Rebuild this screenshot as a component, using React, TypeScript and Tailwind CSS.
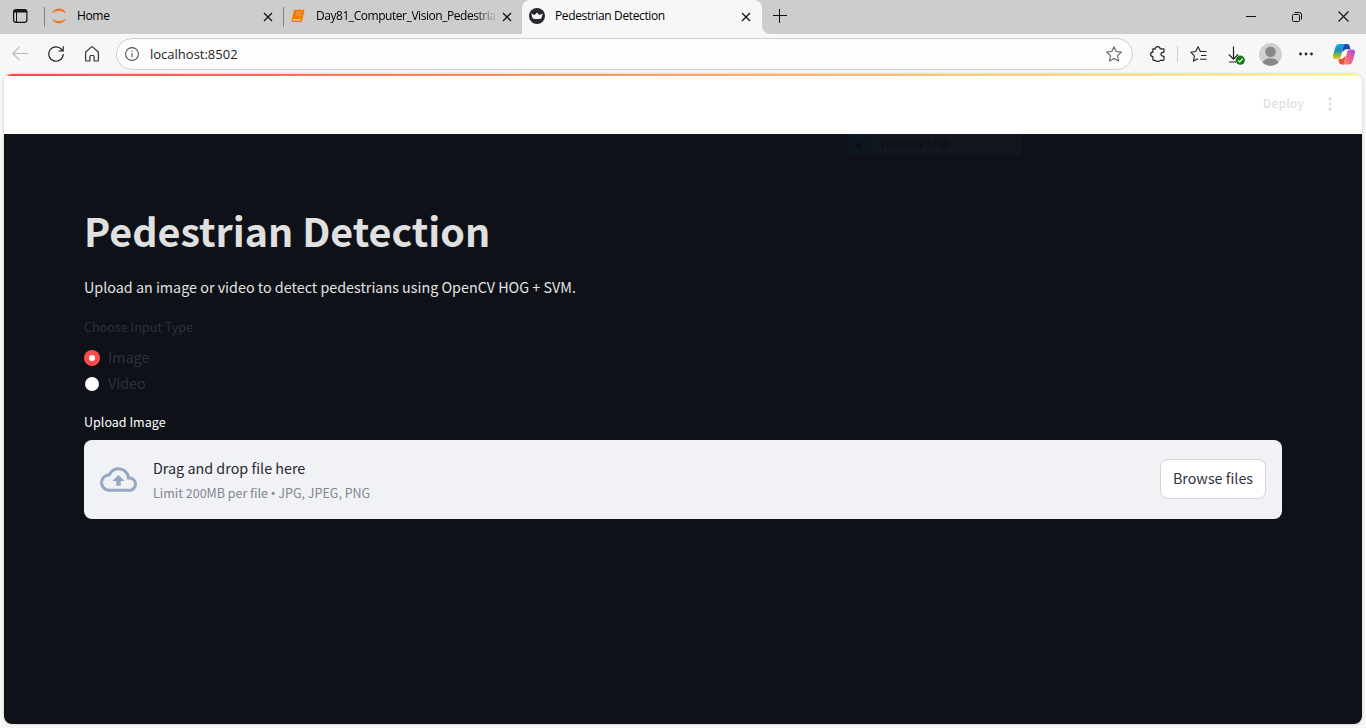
import React from 'react';

const UI = "font-['Open_Sans','Noto_Sans',sans-serif]";

function Close({ className = '' }: { className?: string }) {
  return (
    <svg className={`mt-px h-[10px] w-[10px] shrink-0 ${className}`} viewBox="0 0 10 10" fill="none" stroke="#111" strokeWidth="1.3">
      <path d="M1 1l8 8M9 1L1 9" />
    </svg>
  );
}

function TabStrip() {
  return (
    <div className="flex h-[34px] bg-[#cdcdcd] text-black">
      <div className="flex w-[44px] items-center pl-[13px]">
        <svg className="mb-[2px] h-[14px] w-[15px]" viewBox="0 0 15 14" fill="none" stroke="#111">
          <rect x=".6" y=".6" width="13.3" height="12.8" rx="2.4" strokeWidth="1.2" />
          <path d="M1 2.3h13" strokeWidth="2.4" />
          <path d="M3.5 3v10" strokeWidth="1" />
        </svg>
      </div>
      <div className="flex h-[32px] w-[239px] items-center">
        <div className="mt-[2px] h-5 w-px bg-[#858585]" />
        <svg className="ml-[6px] h-4 w-4" viewBox="0 0 16 16" fill="#f37726">
          <path d="M.8 5.4C2 2.300 4.700.6 8 .6s6 1.700 7.200 4.800C13.500 3.900 11 3 8 3S2.500 3.900.8 5.400z" />
          <path d="M.8 10.600C2 13.700 4.700 15.400 8 15.400s6-1.700 7.200-4.800C13.500 12.100 11 13 8 13S2.500 12.100.8 10.600z" />
        </svg>
        <span className={`ml-[10px] flex-1 text-[12px] leading-4 tracking-[-0.35px] ${UI}`}>Home</span>
        <Close className="mr-[10px]" />
      </div>
      <div className="flex h-[34px] w-[239px] items-center rounded-br-lg pb-[2px]">
        <div className="mt-[2px] h-5 w-px bg-[#858585]" />
        <svg className="ml-[7px] h-[14px] w-[14px]" viewBox="0 0 14 14">
          <path d="M4 .8h8.400c.8 0 1.200.6 1 1.300l-2.200 9.700c-.2.800-.8 1.300-1.600 1.300H2C.8 13.100.3 12 .6 11L2.700 2C2.900 1.200 3.300.8 4 .8z" fill="#f57c00" />
          <path d="M5 3.500h5.800M4.500 5.800h5.700" stroke="#d4b08d" strokeWidth=".9" />
          <path d="M1.700 10.900h8.200" stroke="#eee" strokeWidth="1" />
        </svg>
        <span className={`ml-[11px] w-[179px] whitespace-nowrap text-[12px] leading-4 tracking-[-0.45px] [mask-image:linear-gradient(to_right,black_158px,transparent_182px)] ${UI}`}>
          Day81_Computer_Vision_Pedestria
        </span>
        <Close className="ml-[7px]" />
      </div>
      <div className="flex h-[34px] w-[240px] items-center rounded-t-lg bg-[#f7f7f7] pb-[2px] pl-[7px]">
        <svg className="h-4 w-4" viewBox="0 0 16 16">
          <circle cx="8" cy="8" r="8" fill="#262730" />
          <path d="M2.200 5.600l3.400 1.500L8 4.600l2.400 2.500 3.400-1.500-1.500 4.800c-2.600.8-6 .8-8.600 0z" fill="#f4f4f4" />
        </svg>
        <span className={`ml-[10px] flex-1 whitespace-nowrap text-[12px] leading-4 tracking-[-0.37px] ${UI}`}>Pedestrian Detection</span>
        <Close className="mr-[11px]" />
      </div>
      <div className="flex-1 bg-[#f7f7f7]">
        <div className="flex h-[34px] items-center rounded-bl-lg bg-[#cdcdcd] pb-[2px] pl-[11px] pr-[17px]">
          <svg className="h-[14px] w-[14px]" viewBox="0 0 14 14" stroke="#111" strokeWidth="1">
            <path d="M0 6.500h14M6.500 0v14" />
          </svg>
          <div className="flex-1" />
          <div className="mr-[36px] h-px w-[10px] bg-[#111]" />
          <svg className="mr-[36px] mt-[2px] h-[10px] w-[10px]" viewBox="0 0 10 10" fill="none" stroke="#111">
            <rect x=".5" y="2.500" width="7" height="7" rx="1" />
            <path d="M2.500.5H7.500a2 2 0 0 1 2 2V7.500" />
          </svg>
          <svg className="mt-px h-[11px] w-[11px]" viewBox="0 0 11 11" stroke="#111" strokeWidth="1.100">
            <path d="M.5.5l10 10M10.500.5l-10 10" />
          </svg>
        </div>
      </div>
    </div>
  );
}

function Toolbar() {
  return (
    <div className="flex h-[40px] items-center bg-[#f7f7f7]">
      <svg className="ml-3 h-4 w-4" viewBox="0 0 16 16" fill="none" stroke="#b8b8b8" strokeWidth="1.100">
        <path d="M16 7.500H.8M7.500.9L.8 7.500l6.700 6.700" />
      </svg>
      <svg className="ml-[20px] h-4 w-4" viewBox="0 0 16 16" fill="none" stroke="#222" strokeWidth="1.200">
        <path d="M15.200 8A7.200 7.200 0 1 1 13.600 3.500L14.700 4.700M15.200.3V5H10.500" />
      </svg>
      <svg className="ml-[21px] h-4 w-[14px]" viewBox="0 0 14 16" fill="none" stroke="#333" strokeWidth="1.200">
        <path d="M.6 6.900Q.6 6.200 1.100 5.700L6.200 1.100Q7 .5 7.800 1.100L12.900 5.700Q13.400 6.200 13.400 6.900V14Q13.400 15 12.500 15H9.700Q9.100 15 9.100 14.400V10.800Q9.100 9.500 8 9.500H6Q4.900 9.500 4.900 10.800V14.400Q4.900 15 4.300 15H1.500Q.6 15 .6 14z" />
      </svg>
      <div className="ml-[17px] flex h-8 w-[1017px] items-center rounded-full border border-[#cfcfcf] bg-[#fdfdfd]">
        <svg className="ml-2 h-[14px] w-[14px]" viewBox="0 0 14 14" fill="none" stroke="#555" strokeWidth="1.100">
          <circle cx="7" cy="7" r="6.400" />
          <path d="M7 6v4.200M7 3.500v1.300" />
        </svg>
        <span className={`ml-[11px] flex-1 text-[13px] leading-5 text-[#222] ${UI}`}>localhost:8502</span>
        <svg className="mr-[10px] h-4 w-4" viewBox="0 0 16 16" fill="none" stroke="#666" strokeWidth="1.100" strokeLinejoin="round">
          <path d="M8 .7l2.200 4.800 5.200.6-3.900 3.600 1.100 5.300L8 12.400 3.400 15l1.100-5.300L.6 6.100l5.200-.6z" />
        </svg>
      </div>
      <svg className="ml-[17px] h-4 w-[15px]" viewBox="0 0 15 16" fill="none" stroke="#222" strokeWidth="1.200" strokeLinejoin="round">
        <path d="M2.900 2.900H5.300C5.200 1.400 6.200.7 7.700.7s2.500.7 2.400 2.200h3.200q.7 0 .7.700V6.200C12.200 6.200 11 6.900 11 8.300s1.200 2.100 3 2V13.600q0 .7-.7.700H10.200C10 15 9 15.400 7.700 15.400S5.500 15 5.300 14.300H3.600q-.7 0-.7-.7V10.600C1.500 10.600.6 9.800.6 8.300S1.500 6.200 2.900 6.200z" />
      </svg>
      <div className="ml-[12px] h-4 w-px bg-[#ccc]" />
      <svg className="ml-[12px] h-4 w-[17px]" viewBox="0 0 17 16" fill="none" stroke="#222" strokeWidth="1.100" strokeLinejoin="round">
        <path d="M16.500 5.500H10.400L8 .8 5.700 5.500.7 6.200l3.700 3.600-.9 5.300L8 12.700M11 9.500h5.500M10 13.200h6.500" />
      </svg>
      <svg className="ml-[21px] mt-[3px] h-[19px] w-[17px]" viewBox="0 0 17 19" fill="none">
        <path d="M5.500.5v12.500M.9 8.500l4.600 4.600 4.600-4.600M1 16h7" stroke="#222" strokeWidth="1.200" />
        <circle cx="12.300" cy="14.200" r="4.600" fill="#107c10" />
        <path d="M10 14.300l1.700 1.700 3-3.300" stroke="white" strokeWidth="1.200" />
      </svg>
      <svg className="ml-[13.500px] h-[23px] w-[23px]" viewBox="0 0 23 23">
        <defs>
          <clipPath id="avatar"><circle cx="11.500" cy="11.500" r="11.400" /></clipPath>
        </defs>
        <circle cx="11.500" cy="11.500" r="11.400" fill="#d2d0ce" />
        <g clipPath="url(#avatar)" fill="#8a8886">
          <circle cx="11.500" cy="8.800" r="5.300" />
          <path d="M3.500 20Q5 15.200 11.500 15.200T19.500 20Q16 23 11.500 23T3.500 20z" />
        </g>
      </svg>
      <svg className="ml-[17.500px] h-3 w-[14px]" viewBox="0 0 14 12" fill="#222">
        <circle cx="1.500" cy="6" r="1.400" /><circle cx="7" cy="6" r="1.400" /><circle cx="12.500" cy="6" r="1.400" />
      </svg>
      <svg className="ml-[20px] h-[21px] w-[22px]" viewBox="0 0 22 21">
        <defs>
          <linearGradient id="copilotLeft" x1="0" y1="0" x2="0" y2="1">
            <stop offset="0" stopColor="#15a5e8" /><stop offset=".45" stopColor="#218fb5" /><stop offset=".72" stopColor="#79b947" /><stop offset="1" stopColor="#f8c414" />
          </linearGradient>
          <linearGradient id="copilotRight" x1="1" y1="0" x2="0" y2="1">
            <stop offset="0" stopColor="#a550ed" /><stop offset=".5" stopColor="#ed5d92" /><stop offset="1" stopColor="#fb9356" />
          </linearGradient>
        </defs>
        <path d="M9.500 0h5Q16 .2 16.600 2L17.500 5.300H14Q12.500 5 11.500 6L9.500 8z" fill="#1647b5" />
        <path d="M5.400 15H9l3.500-3L11 20.400H8.500Q6.500 20.400 6 18.500z" fill="#e5532f" />
        <path d="M6 0h6.500q-1.300.5-1.800 2.300L7.600 13Q7 15 5 15H2Q-.7 14.500.2 10.800L2.500 3Q3.400.2 6 0z" fill="url(#copilotLeft)" />
        <path d="M16 20.400H9.500q1.300-.5 1.800-2.300L14.400 7.400Q15 5.400 17 5.400h3q2.700.5 1.800 4.200l-2.300 7.800Q18.600 20.200 16 20.400z" fill="url(#copilotRight)" />
      </svg>
    </div>
  );
}

const APP = "font-['Noto_Sans_CJK_SC',sans-serif]";

function StreamlitPage() {
  return (
    <div className={`relative mx-[4px] flex h-[650px] flex-col overflow-hidden rounded-lg shadow-[0_0_3px_#bbb] ${APP}`}>
      <div className="h-[2px] shrink-0 bg-[linear-gradient(90deg,#ff4b4b,#fffd80)]" />
      <header className="flex h-[58px] shrink-0 items-center justify-end bg-white pb-[3px] pr-[29px] text-[#e2e2e3]">
        <span className="mb-px mr-[22px] text-[12.300px] font-medium leading-5">Deploy</span>
        <svg className="mt-px h-[14px] w-[7px]" viewBox="0 0 7 14" fill="#dedee0">
          <circle cx="4" cy="2" r="1.700" /><circle cx="4" cy="7" r="1.700" /><circle cx="4" cy="12" r="1.700" />
        </svg>
      </header>
      <div className="absolute left-[844px] top-[60px] flex h-[21px] w-[173px] items-center bg-[#12171f] text-[#090c12]">
        <div className="flex h-[21px] w-[23px] items-center bg-[#0e1620] pl-2"><div className="h-[6px] w-[6px] rounded-full bg-[#0a1018]" /></div>
        <span className={`mb-px ml-[9px] text-[12px] leading-4 tracking-[-0.3px] ${UI}`}>Window Snip</span>
      </div>
      <main className="flex-1 bg-[#0e1117] px-[80px] pt-[69px]">
        <h1 className="h-[53px] whitespace-nowrap text-[39.400px] font-bold leading-[53px] text-[#e0e0e0]">Pedestrian Detection</h1>
        <p className="mt-[19px] h-6 whitespace-nowrap text-[14.330px] leading-6 text-[#e4e4e4]">Upload an image or video to detect pedestrians using OpenCV HOG + SVM.</p>
        <div className="mt-[18px] h-5 text-[12.550px] leading-5 text-[#2e2f39]">Choose Input Type</div>
        <div className="mt-[8px] flex h-[26px] items-center text-[14.350px] leading-6 text-[#2e2f39]">
          <span className="mr-2 flex h-4 w-4 items-center justify-center rounded-full bg-[#ff4b4b]"><span className="h-[6px] w-[6px] rounded-full bg-white" /></span>
          <span className="mb-[2px]">Image</span>
        </div>
        <div className="flex h-[26px] items-center text-[14.350px] leading-6 text-[#2e2f39]">
          <span className="ml-px mr-[9px] h-[14px] w-[14px] rounded-full bg-white" />
          <span className="mb-[2px]">Video</span>
        </div>
        <div className="mt-[15px] h-5 text-[12.550px] leading-5 text-white">Upload Image</div>
        <section className="mt-[8px] flex h-[79px] items-center rounded-lg bg-[#f0f2f6] px-4">
          <svg className="h-[37px] w-[37px]" viewBox="0 0 24 24" fill="none">
            <path d="M19.350 10.040A7.490 7.490 0 0 0 12 4C9.110 4 6.600 5.640 5.350 8.040A5.994 5.994 0 0 0 0 14c0 3.310 2.690 6 6 6h13c2.760 0 5-2.240 5-5 0-2.640-2.050-4.780-4.650-4.960zM19 18H6c-2.210 0-4-1.790-4-4 0-2.050 1.530-3.760 3.560-3.970l1.070-.11.5-.95A5.469 5.469 0 0 1 12 6c2.620 0 4.880 1.860 5.390 4.430l.3 1.500 1.530.11A2.980 2.980 0 0 1 22 15c0 1.650-1.350 3-3 3zM8 13h2.550v3h2.900v-3H16l-4-4z" fill="#97a6c3" />
          </svg>
          <div className="ml-4 flex-1">
            <div className="h-6 text-[14.350px] leading-6 text-[#262730]">Drag and drop file here</div>
            <div className="mt-[3px] h-5 whitespace-nowrap text-[12.500px] leading-5 text-[#828691]">Limit 200MB per file <span className="font-['Noto_Sans',sans-serif]">•</span> JPG, JPEG, PNG</div>
          </div>
          <button className="mb-px h-[40px] w-[106px] whitespace-nowrap rounded-lg border border-[#d4d5d9] bg-white pb-[2px] text-[14.350px] leading-6 text-[#31333f]">Browse files</button>
        </section>
      </main>
    </div>
  );
}

export default function App() {
  return (
    <div className="h-[728px] w-[1366px] overflow-hidden bg-[#f7f7f7]">
      <TabStrip />
      <Toolbar />
      <StreamlitPage />
    </div>
  );
}
